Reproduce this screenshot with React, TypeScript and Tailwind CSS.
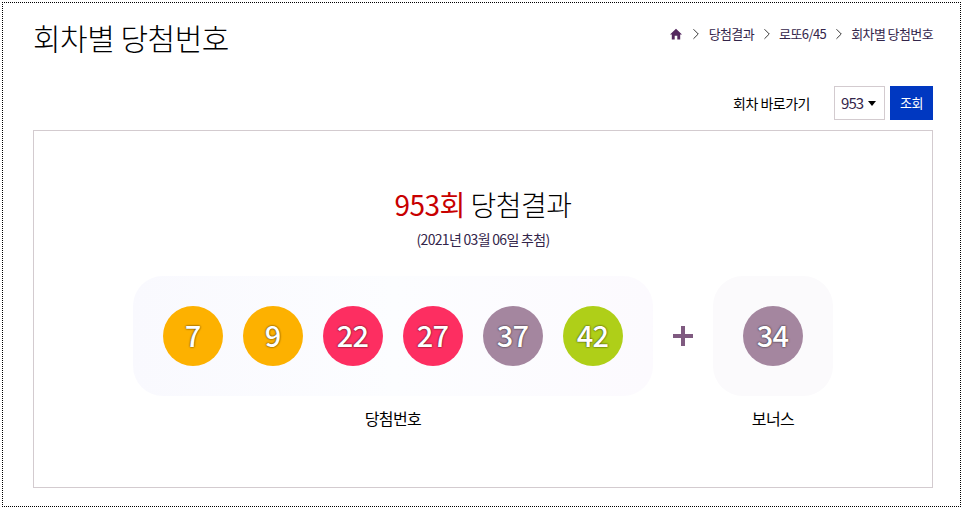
import React from 'react';
import { ChevronRight } from 'lucide-react';

const font = { fontFamily: '"Noto Sans CJK KR", "Noto Sans", sans-serif' };

const yellow = 'bg-[#fdb100]';
const red = 'bg-[#fd2e61]';
const purple = 'bg-[#a4869f]';
const green = 'bg-[#afcf18]';

const balls = [
  { n: 7, color: yellow },
  { n: 9, color: yellow },
  { n: 22, color: red },
  { n: 27, color: red },
  { n: 37, color: purple },
  { n: 42, color: green },
];

function Ball({ n, color }: { n: number; color: string }) {
  return (
    <div className={`flex h-[60px] w-[60px] items-center justify-center rounded-full pb-[3px] pr-[1px] text-[29px] font-medium tracking-[-0.8px] text-white [text-shadow:0_0_2px_rgba(0,0,0,0.9)] ${color}`}>
      {n}
    </div>
  );
}

function Crumb() {
  return <ChevronRight size={18} strokeWidth={1.2} className="mx-[3.5px] text-[#222]" />;
}

export default function App() {
  return (
    <div style={font} className="m-[2px] h-[505px] w-[959px] border border-dotted border-black bg-white pl-[30px] pr-[27px]">
      <div className="flex items-start justify-between pt-[13px]">
        <h1 className="text-[30px] font-light leading-[42px] tracking-[-0.5px] text-black">회차별 당첨번호</h1>
        <div className="flex items-center pt-[8px] text-[13px] tracking-[-0.6px] text-[#33254a]">
          <svg width="12" height="12" viewBox="0 0 12 12" className="mr-[2px] text-[#55285f]">
            <path d="M6 0.8 L12 6.6 H10.2 V11.4 H7.3 V7.8 H4.7 V11.4 H1.8 V6.6 H0 Z" fill="currentColor" />
          </svg>
          <Crumb />
          <span>당첨결과</span>
          <Crumb />
          <span>로또6/45</span>
          <Crumb />
          <span>회차별 당첨번호</span>
        </div>
      </div>

      <div className="mt-[28px] flex h-[34px] items-center justify-end">
        <span className="mr-[24px] text-[14px] tracking-[-0.5px] text-black">회차 바로가기</span>
        <div className="flex h-[34px] w-[51px] items-center border border-[#d3cbcf] pl-[6px] text-[15px] tracking-[-0.9px] text-[#33254a]">
          953
          <span className="ml-[5px] h-0 w-0 border-x-[4px] border-t-[5px] border-x-transparent border-t-black" />
        </div>
        <button className="ml-[5px] h-[34px] w-[43px] bg-[#0038c1] text-[13px] tracking-[-0.4px] text-white">조회</button>
      </div>

      <div className="mt-[10px] flex h-[358px] w-[900px] flex-col items-center border border-[#d3cbcf]">
        <h2 className="mt-[53px] text-[28px] font-light leading-[40px] tracking-[-0.5px] text-black">
          <span className="font-normal text-[#c80000]">953회</span> 당첨결과
        </h2>
        <p className="mt-[5px] text-[14px] leading-[20px] tracking-[-0.7px] text-[#33254a]">(2021년 03월 06일 추첨)</p>

        <div className="mt-[27px] flex w-[700px] items-start">
          <div className="flex w-[520px] flex-col items-center">
            <div className="flex h-[120px] w-[520px] items-center gap-[20px] rounded-[30px] bg-gradient-to-r from-[#f9f9fe] via-[#fcfdff] to-[#fcfafe] px-[30px]">
              {balls.map((b) => (
                <Ball key={b.n} n={b.n} color={b.color} />
              ))}
            </div>
            <span className="mt-[11px] text-[16px] leading-[22px] tracking-[-0.6px] text-black">당첨번호</span>
          </div>

          <div className="flex h-[120px] w-[60px] items-center justify-center">
            <svg width="20" height="20" viewBox="0 0 20 20">
              <path d="M8 0 H12 V8 H20 V12 H12 V20 H8 V12 H0 V8 H8 Z" fill="#7f5a80" />
            </svg>
          </div>

          <div className="flex w-[120px] flex-col items-center">
            <div className="flex h-[120px] w-[120px] items-center justify-center rounded-[30px] bg-[#fbfafc]">
              <Ball n={34} color={purple} />
            </div>
            <span className="mt-[11px] text-[16px] leading-[22px] tracking-[-0.6px] text-black">보너스</span>
          </div>
        </div>
      </div>
    </div>
  );
}
